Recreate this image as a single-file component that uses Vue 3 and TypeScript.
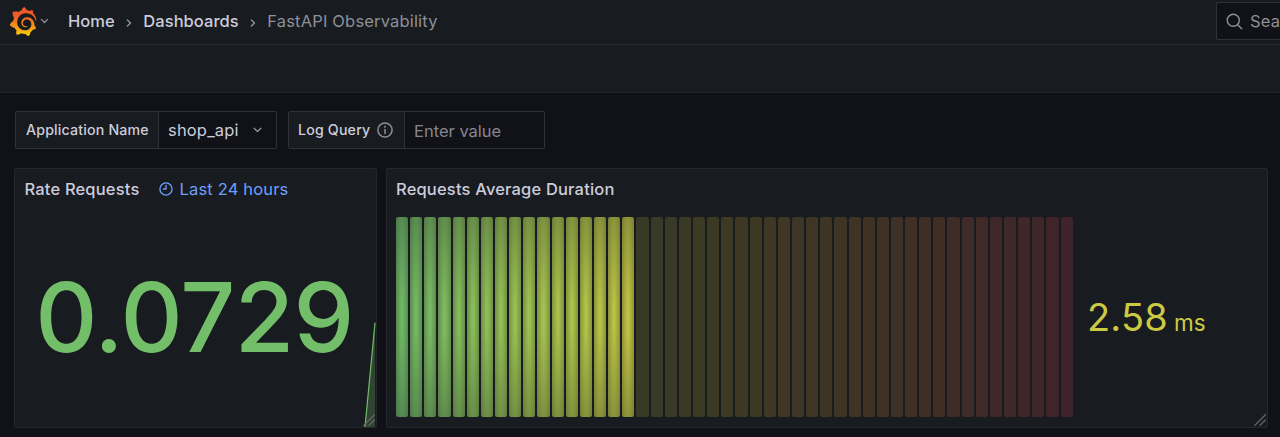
<script setup lang="ts">
type Rgb = [number, number, number]

const CELL_COUNT = 48
const LIT_COUNT = 17
const stops: Rgb[] = [
  [115, 191, 105],
  [250, 222, 42],
  [242, 73, 92],
]

// Uniform B-spline interpolation over the three threshold colours.
function colorAt(t: number): Rgb {
  const n = stops.length - 1
  const i = Math.min(Math.floor(t * n), n - 1)
  const u = t * n - i
  return [0, 1, 2].map((c) => {
    const v1 = stops[i][c]
    const v2 = stops[i + 1][c]
    const v0 = i > 0 ? stops[i - 1][c] : 2 * v1 - v2
    const v3 = i < n - 1 ? stops[i + 2][c] : 2 * v2 - v1
    const u2 = u * u
    const u3 = u2 * u
    return Math.round(
      ((1 - 3 * u + 3 * u2 - u3) * v0 +
        (4 - 6 * u2 + 3 * u3) * v1 +
        (1 + 3 * u + 3 * u2 - 3 * u3) * v2 +
        u3 * v3) / 6,
    )
  }) as Rgb
}

const cells = Array.from({ length: CELL_COUNT }, (_, i) => {
  const rgb = colorAt(i / (CELL_COUNT - 1)).join(', ')
  return i < LIT_COUNT
    ? `radial-gradient(rgba(${rgb}, 0.95) 10%, rgba(${rgb}, 0.55))`
    : `rgba(${rgb}, 0.18)`
})
</script>

<template>
  <div class="page">
    <header class="topbar">
      <svg class="logo" viewBox="0 0 351 365">
        <defs>
          <linearGradient id="flame" gradientUnits="userSpaceOnUse" x1="175.5" y1="445" x2="175.5" y2="114">
            <stop offset="0" stop-color="#fff100" />
            <stop offset="1" stop-color="#f05a28" />
          </linearGradient>
        </defs>
        <path fill="url(#flame)" d="M342,161.2c-0.6-6.1-1.6-13.1-3.6-20.9c-2-7.7-5-16.2-9.4-25c-4.4-8.8-10.1-17.9-17.5-26.8c-2.9-3.5-6.1-6.9-9.5-10.2c5.1-20.3-6.2-37.9-6.2-37.9c-19.5-1.2-31.9,6.1-36.5,9.4c-0.8-0.3-1.5-0.7-2.3-1c-3.3-1.3-6.7-2.6-10.3-3.7c-3.5-1.1-7.1-2.1-10.8-3c-3.7-0.9-7.4-1.6-11.2-2.2c-0.7-0.1-1.3-0.2-2-0.3c-8.5-27.2-32.9-38.6-32.9-38.6c-27.3,17.3-32.4,41.5-32.4,41.5s-0.1,0.5-0.3,1.4c-1.5,0.4-3,0.9-4.5,1.3c-2.1,0.6-4.2,1.4-6.2,2.2c-2.1,0.8-4.1,1.6-6.2,2.5c-4.1,1.8-8.2,3.8-12.2,6c-3.9,2.2-7.7,4.6-11.4,7.1c-0.5-0.2-1-0.4-1-0.4c-37.8-14.4-71.3,2.9-71.3,2.9c-3.1,40.2,15.1,65.5,18.7,70.1c-0.9,2.5-1.7,5-2.5,7.5c-2.8,9.1-4.9,18.4-6.2,28.1c-0.2,1.4-0.4,2.8-0.5,4.2C18.8,192.7,8.5,228,8.5,228c29.1,33.5,63.1,35.6,63.1,35.6c0,0,0.1-0.1,0.1-0.1c4.3,7.7,9.3,15,14.9,21.9c2.4,2.9,4.8,5.6,7.4,8.3c-10.6,30.4,1.5,55.6,1.5,55.6c32.4,1.2,53.7-14.2,58.2-17.7c3.2,1.1,6.5,2.1,9.8,2.9c10,2.6,20.2,4.1,30.4,4.5c2.5,0.1,5.1,0.2,7.6,0.1l1.2,0l0.8,0l1.6,0l1.6-0.1l0,0.1c15.3,21.8,42.1,24.9,42.1,24.9c19.1-20.1,20.2-40.1,20.2-44.4l0,0c0,0,0-0.1,0-0.3c0-0.4,0-0.6,0-0.6l0,0c0-0.3,0-0.6,0-0.9c4-2.8,7.8-5.8,11.4-9.1c7.6-6.9,14.3-14.8,19.9-23.3c0.5-0.8,1-1.6,1.5-2.4c21.6,1.2,36.9-13.4,36.9-13.4c-3.6-22.5-16.4-33.5-19.1-35.6l0,0c0,0-0.1-0.1-0.3-0.2c-0.2-0.1-0.2-0.2-0.2-0.2c-0.1-0.1-0.3-0.2-0.5-0.3c0.1-1.4,0.2-2.7,0.3-4.1c0.2-2.4,0.2-4.9,0.2-7.3l0-1.8l0-0.9l0-0.5l-0.1-2.1l-0.1-2c0-0.7-0.1-1.3-0.2-1.9c-0.1-0.6-0.1-1.3-0.2-1.9l-0.2-1.9l-0.3-1.9c-0.4-2.5-0.8-4.9-1.4-7.4c-2.3-9.7-6.1-18.9-11-27.2c-5-8.3-11.2-15.6-18.3-21.8c-7-6.2-14.9-11.2-23.1-14.9c-8.3-3.7-16.9-6.1-25.5-7.2c-4.3-0.6-8.6-0.8-12.9-0.7l-3.2,0l-1.6,0.1c-0.6,0-1.2,0.1-1.7,0.1c-2.2,0.2-4.4,0.5-6.5,0.9c-8.6,1.6-16.7,4.7-23.8,9c-7.1,4.3-13.3,9.6-18.3,15.6c-5,6-8.9,12.7-11.6,19.6c-2.7,6.9-4.2,14.1-4.6,21c-0.1,1.7-0.1,3.5-0.1,5.2c0,0.4,0,0.9,0,1.3l0.1,1.4c0.1,0.8,0.1,1.7,0.2,2.5c0.3,3.5,1,6.9,1.9,10.1c1.9,6.5,4.9,12.4,8.6,17.4c3.7,5,8.2,9.1,12.9,12.4c4.7,3.2,9.8,5.5,14.8,7c5,1.5,10,2.1,14.7,2.1c0.6,0,1.2,0,1.7,0c0.6,0,1.2,0,1.8-0.1c0.5,0,1-0.1,1.5-0.1l1.8-0.3c0.6-0.1,1.1-0.2,1.7-0.3c0.6-0.1,1.1-0.2,1.6-0.4c1.1-0.2,2.1-0.6,3.1-0.9c2-0.7,4-1.5,5.7-2.4c1.8-0.9,3.4-2,5-3c0.4-0.3,0.9-0.6,1.3-1c1.6-1.3,1.9-3.7,0.6-5.3c-1.1-1.4-3.1-1.8-4.7-0.9c-0.4,0.2-0.8,0.4-1.2,0.6c-1.4,0.7-2.8,1.3-4.3,1.8c-1.5,0.5-3.1,0.9-4.7,1.2c-0.8,0.1-1.6,0.2-2.5,0.3c-0.4,0-0.8,0.1-1.3,0.1c-0.4,0-0.9,0-1.2,0c-0.4,0-0.8,0-1.2,0c-0.5,0-1,0-1.5-0.1l-1.3-0.1c-0.5-0.1-0.9-0.1-1.4-0.2c-3.7-0.5-7.4-1.6-10.9-3.2c-3.6-1.6-7-3.8-10.1-6.6c-3.1-2.8-5.8-6.1-7.9-9.9c-2.1-3.8-3.6-8-4.3-12.4c-0.3-2.2-0.5-4.5-0.4-6.7c0-0.6,0.1-1.2,0.1-1.8l0.1-1.7c0.1-1.2,0.3-2.4,0.5-3.6c1.7-9.6,6.5-19,13.9-26.1c1.9-1.8,3.9-3.4,6-4.9c2.1-1.5,4.4-2.8,6.8-3.9c2.4-1.1,4.8-2,7.4-2.7c2.5-0.7,5.1-1.1,7.8-1.4c1.3-0.1,2.6-0.2,4-0.2l3.1,0l1.1,0.1c2.9,0.2,5.7,0.6,8.5,1.3c5.6,1.2,11.1,3.3,16.2,6.1c10.2,5.7,18.9,14.5,24.2,25.1c2.7,5.3,4.6,11,5.5,16.9c0.2,1.5,0.4,3,0.5,4.5l0.2,2.2l0,2.2l0,2.1l-0.1,3.7c-0.1,1.6-0.3,3.3-0.5,4.9c-0.2,1.6-0.5,3.2-0.8,4.8c-0.3,1.6-0.7,3.2-1.1,4.7c-0.8,3.1-1.8,6.2-3,9.3c-2.4,6-5.6,11.8-9.4,17.1c-7.7,10.6-18.2,19.2-30.2,24.7c-6,2.7-12.3,4.7-18.8,5.7c-3.2,0.6-6.5,0.9-9.8,1l-5,0c-1.8,0-3.5-0.1-5.3-0.3c-7-0.5-13.9-1.8-20.7-3.7c-6.7-1.9-13.2-4.6-19.4-7.8c-12.3-6.6-23.4-15.6-32-26.5c-4.3-5.4-8.1-11.3-11.2-17.4c-3.1-6.1-5.6-12.6-7.4-19.1c-1.8-6.6-2.9-13.3-3.4-20.1l-0.1-1.3l0-8c0.1-3.3,0.4-6.8,0.8-10.2c0.4-3.4,1-6.9,1.7-10.3c0.7-3.4,1.5-6.8,2.5-10.2c1.9-6.7,4.3-13.2,7.1-19.3c5.7-12.2,13.1-23.1,22-31.8c2.2-2.2,4.5-4.2,6.9-6.2c2.4-1.9,4.9-3.7,7.5-5.4c2.5-1.7,5.2-3.2,7.9-4.6c1.3-0.7,2.7-1.4,4.1-2c1.4-0.6,2.8-1.2,4.2-1.8c2.8-1.2,5.7-2.2,8.7-3.1c1.5-0.4,3-0.9,4.4-1.3c1.5-0.4,3-0.8,4.5-1.1c1.5-0.4,3-0.7,4.6-1c0.8-0.1,1.5-0.3,2.3-0.4l2.3-0.4c0.8-0.1,1.5-0.2,2.3-0.3c1.7-0.2,3.5-0.4,5.2-0.6l2.7-0.3l1.1-0.1c0.9-0.1,1.7-0.1,2.6-0.2l2.3-0.1c0.7,0,1.5-0.1,2.2-0.1c2.9-0.1,5.9-0.1,8.8,0c5.8,0.2,11.5,0.9,17,1.9c11.1,2.1,21.5,5.6,31,10.3c9.5,4.6,17.9,10.3,25.3,16.5c0.9,0.8,1.8,1.6,2.7,2.4c0.9,0.8,1.7,1.6,2.6,2.4c1.7,1.6,3.3,3.2,4.9,4.9c3.1,3.3,6,6.6,8.6,10c5.2,6.7,9.4,13.5,12.7,19.9l1.2,2.4c0.4,0.8,0.8,1.6,1.1,2.4c0.7,1.5,1.4,3,2.1,4.6c1.2,3,2.4,5.9,3.3,8.6c1.5,4.4,2.6,8.3,3.5,11.7c0.3,1.4,1.6,2.3,3,2.1c1.5-0.1,2.6-1.3,2.6-2.8C342.6,170.4,342.5,166.1,342,161.2z" />
      </svg>
      <svg class="logo-caret" viewBox="0 0 10 6"><path d="M1.5 1.2 5 4.6 8.5 1.2" /></svg>
      <nav class="crumbs">
        <a class="home">Home</a>
        <svg class="sep" viewBox="0 0 6 10"><path d="M1.4 2 4.5 5 1.4 8" /></svg>
        <a class="dash">Dashboards</a>
        <svg class="sep" viewBox="0 0 6 10"><path d="M1.4 2 4.5 5 1.4 8" /></svg>
        <span class="current">FastAPI Observability</span>
      </nav>
      <div class="search">
        <svg viewBox="0 0 18 18"><circle cx="7.7" cy="7.7" r="6.4" /><path d="m12.4 12.4 4.2 4.2" /></svg>
        <span>Search or jump to...</span>
      </div>
    </header>
    <div class="toolbar"></div>

    <main>
      <div class="variables">
        <div class="variable app">
          <label>Application Name</label>
          <div class="field">
            <span>shop_api</span>
            <svg class="caret" viewBox="0 0 10 6"><path d="M1.2 1.1 5 4.7 8.8 1.1" /></svg>
          </div>
        </div>
        <div class="variable log">
          <label>
            Log Query
            <svg class="info" viewBox="0 0 16 16"><circle cx="8" cy="8" r="7.1" /><path d="M8 7.4v4M8 4.3v1" /></svg>
          </label>
          <div class="field placeholder">Enter value</div>
        </div>
      </div>

      <div class="panels">
        <section class="panel rate">
          <h2>
            <span>Rate Requests</span>
            <span class="range">
              <svg viewBox="0 0 14 14"><circle cx="7" cy="7" r="6.1" /><path d="M7 3.3V7H4.4" /></svg>
              <span>Last 24 hours</span>
            </span>
          </h2>
          <div class="stat">0.0729</div>
          <svg class="spark" viewBox="0 0 12 105">
            <path class="area" d="M1 105 11 1V105Z" />
            <path class="line" d="M1 105 11 1" />
          </svg>
          <svg class="grip" viewBox="0 0 12 12"><path d="M.8 11.4 11.4.8M6 11.4 11.4 6" /></svg>
        </section>

        <section class="panel duration">
          <h2>Requests Average Duration</h2>
          <div class="gauge">
            <div class="cells">
              <i v-for="(background, i) in cells" :key="i" :style="{ background }"></i>
            </div>
            <div class="reading"><span class="value">2.58</span><span class="unit">ms</span></div>
          </div>
          <svg class="grip" viewBox="0 0 12 12"><path d="M.8 11.4 11.4.8M6 11.4 11.4 6" /></svg>
        </section>
      </div>
    </main>
  </div>
</template>

<style>
body {
  margin: 0;
  background: #111217;
}
</style>

<style scoped>
* {
  box-sizing: border-box;
}
.page {
  height: 437px;
  overflow: hidden;
  background: #111217;
  color: #ccccdc;
  font-family: Inter, "Liberation Sans", sans-serif;
  font-size: 16.5px;
  letter-spacing: 0.17px;
}
svg {
  display: block;
  flex: none;
  fill: none;
  stroke: #8e8f98;
  stroke-width: 1.5;
  stroke-linecap: round;
  stroke-linejoin: round;
}
.topbar {
  display: flex;
  align-items: center;
  height: 45px;
  padding: 0 0 2px 9px;
  background: #181b1f;
  border-bottom: 1px solid #2b2d32;
}
.logo {
  width: 28px;
  height: 29px;
  stroke: none;
}
.logo-caret {
  width: 9px;
  height: 6px;
  margin-left: 3px;
}
.crumbs {
  display: flex;
  align-items: center;
  margin-left: 19px;
  font-weight: 500;
  letter-spacing: 0.05px;
  white-space: nowrap;
}
.sep {
  width: 6px;
  height: 10px;
  margin: 3px 11px 0 11.5px;
}
.current {
  font-weight: 400;
  letter-spacing: 0.17px;
  color: #8e8f9a;
}
.search {
  display: flex;
  align-items: center;
  gap: 7px;
  width: 64px;
  height: 38px;
  margin-left: auto;
  padding-left: 9px;
  overflow: hidden;
  white-space: nowrap;
  color: #8e8f9a;
  background: #111217;
  border: 1px solid #303238;
  border-right: 0;
  border-radius: 2px 0 0 2px;
}
.search svg {
  width: 17px;
  height: 17px;
}
.toolbar {
  height: 48px;
  background: #181b1f;
  border-bottom: 1px solid #25272c;
}
main {
  padding: 18px 12px 0 14px;
}
.variables {
  display: flex;
  gap: 11px;
  padding-left: 1px;
}
.variable {
  display: flex;
  height: 38px;
  border: 1px solid #303238;
  border-radius: 2px;
}
.app {
  width: 262px;
}
.log {
  width: 257px;
}
.variable label {
  display: flex;
  align-items: center;
  gap: 7px;
  padding: 0 0 2px 10px;
  background: #181b1f;
  border-right: 1px solid #303238;
  font-size: 14.2px;
  font-weight: 500;
  white-space: nowrap;
}
.app label {
  width: 143px;
}
.log label {
  width: 116px;
  padding-left: 9px;
}
.info {
  width: 16px;
  height: 16px;
  margin-top: 1px;
}
.field {
  display: flex;
  flex: 1;
  align-items: center;
  gap: 14px;
  padding-left: 9px;
}
.caret {
  width: 9px;
  height: 6px;
}
.placeholder {
  padding-top: 1px;
  letter-spacing: 0;
  color: #85868f;
}
.panels {
  display: flex;
  gap: 9px;
  margin-top: 19px;
}
.panel {
  position: relative;
  height: 260px;
  background: #181b1f;
  border: 1px solid #25272c;
  border-radius: 2px;
}
.rate {
  width: 363px;
}
.duration {
  flex: 1;
}
h2 {
  display: flex;
  align-items: center;
  height: 38px;
  margin: 0;
  padding: 1px 0 0 9px;
  font-size: 16.5px;
  font-weight: 500;
  white-space: nowrap;
}
.rate h2 {
  padding-left: 9.5px;
}
.range {
  display: flex;
  align-items: center;
  gap: 6px;
  margin-left: 20px;
  font-weight: 400;
  color: #6e9fff;
}
.range svg {
  width: 14px;
  height: 14px;
  stroke: #6e9fff;
  stroke-width: 1.3;
}
.stat {
  display: flex;
  align-items: center;
  justify-content: center;
  height: 220px;
  padding-right: 2px;
  font-size: 96.5px;
  font-weight: 500;
  letter-spacing: -0.6px;
  color: #73bf69;
}
.spark {
  position: absolute;
  right: 0;
  bottom: 0;
  width: 12px;
  height: 105px;
}
.area {
  fill: #73bf69;
  fill-opacity: 0.25;
  stroke: none;
}
.line {
  stroke: #73bf69;
  stroke-width: 1.2;
}
.grip {
  position: absolute;
  right: 1px;
  bottom: 1px;
  width: 12px;
  height: 12px;
  stroke: #65676c;
  stroke-width: 1.3;
}
.gauge {
  display: flex;
  align-items: center;
  padding-left: 9px;
}
.cells {
  display: flex;
  gap: 2px;
  width: 677px;
  height: 200.5px;
  margin-top: 9.5px;
}
.cells i {
  flex: 1;
  border-radius: 2px;
}
.reading {
  display: flex;
  align-items: baseline;
  margin: 9px 0 0 14px;
  color: #cbca43;
  line-height: 1;
}
.value {
  font-size: 38px;
}
.unit {
  margin-left: 6px;
  font-size: 22.5px;
}
</style>
